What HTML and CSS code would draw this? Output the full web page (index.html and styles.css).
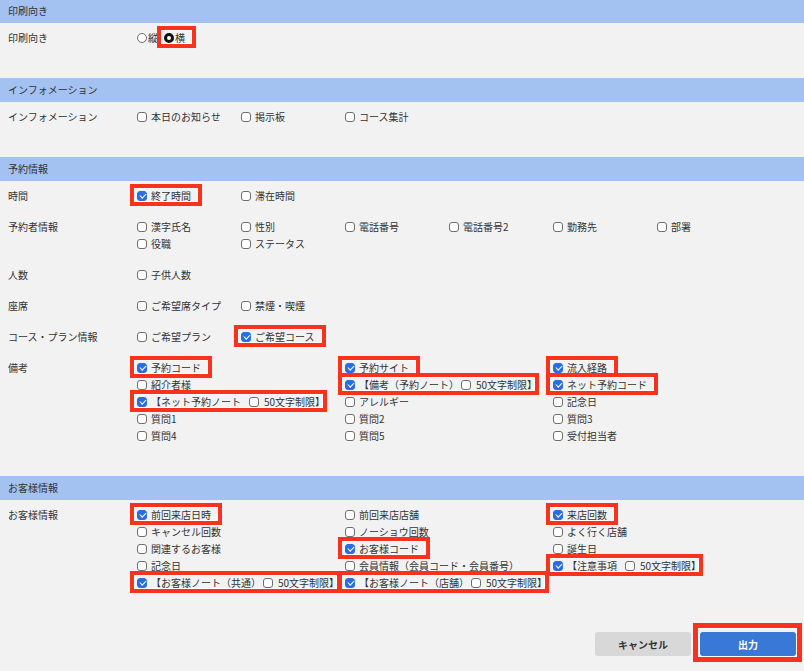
FILE: index.html
```html
<!DOCTYPE html>
<html lang="ja">
<head>
<meta charset="utf-8">
<title>印刷設定</title>
<link rel="stylesheet" href="styles.css">
</head>
<body>
<div class="page">
  <section class="sec">
    <h2 class="sec-head">印刷向き</h2>
    <div class="sec-body">
      <div class="row">
        <div class="row-label">印刷向き</div>
        <div class="opts radios">
          <label class="opt"><span class="rd"></span>縦</label>
          <label class="opt mark"><span class="rd on"></span>横</label>
        </div>
      </div>
    </div>
  </section>

  <section class="sec">
    <h2 class="sec-head">インフォメーション</h2>
    <div class="sec-body">
      <div class="row">
        <div class="row-label">インフォメーション</div>
        <div class="opts g6">
          <label class="opt"><span class="cb"></span>本日のお知らせ</label>
          <label class="opt"><span class="cb"></span>掲示板</label>
          <label class="opt"><span class="cb"></span>コース集計</label>
        </div>
      </div>
    </div>
  </section>

  <section class="sec">
    <h2 class="sec-head">予約情報</h2>
    <div class="sec-body">
      <div class="row">
        <div class="row-label">時間</div>
        <div class="opts g6">
          <label class="opt mark"><span class="cb on"></span>終了時間</label>
          <label class="opt"><span class="cb"></span>滞在時間</label>
        </div>
      </div>
      <div class="row">
        <div class="row-label">予約者情報</div>
        <div class="opts g6">
          <label class="opt"><span class="cb"></span>漢字氏名</label>
          <label class="opt"><span class="cb"></span>性別</label>
          <label class="opt"><span class="cb"></span>電話番号</label>
          <label class="opt"><span class="cb"></span>電話番号2</label>
          <label class="opt"><span class="cb"></span>勤務先</label>
          <label class="opt"><span class="cb"></span>部署</label>
          <label class="opt"><span class="cb"></span>役職</label>
          <label class="opt"><span class="cb"></span>ステータス</label>
        </div>
      </div>
      <div class="row">
        <div class="row-label">人数</div>
        <div class="opts g6">
          <label class="opt"><span class="cb"></span>子供人数</label>
        </div>
      </div>
      <div class="row">
        <div class="row-label">座席</div>
        <div class="opts g6">
          <label class="opt"><span class="cb"></span>ご希望席タイプ</label>
          <label class="opt"><span class="cb"></span>禁煙・喫煙</label>
        </div>
      </div>
      <div class="row">
        <div class="row-label">コース・プラン情報</div>
        <div class="opts g6">
          <label class="opt"><span class="cb"></span>ご希望プラン</label>
          <label class="opt mark"><span class="cb on"></span>ご希望コース</label>
        </div>
      </div>
      <div class="row">
        <div class="row-label">備考</div>
        <div class="opts g3">
          <label class="opt mark"><span class="cb on"></span>予約コード</label>
          <label class="opt mark"><span class="cb on"></span>予約サイト</label>
          <label class="opt mark"><span class="cb on"></span>流入経路</label>

          <label class="opt"><span class="cb"></span>紹介者様</label>
          <span class="opt mark tight"><span class="cb on"></span>【備考（予約ノート）<span class="cb inner"></span>50文字制限】</span>
          <label class="opt mark"><span class="cb on"></span>ネット予約コード</label>

          <span class="opt mark tight"><span class="cb on"></span>【ネット予約ノート<span class="cb inner sp"></span>50文字制限】</span>
          <label class="opt"><span class="cb"></span>アレルギー</label>
          <label class="opt"><span class="cb"></span>記念日</label>

          <label class="opt"><span class="cb"></span>質問1</label>
          <label class="opt"><span class="cb"></span>質問2</label>
          <label class="opt"><span class="cb"></span>質問3</label>

          <label class="opt"><span class="cb"></span>質問4</label>
          <label class="opt"><span class="cb"></span>質問5</label>
          <label class="opt"><span class="cb"></span>受付担当者</label>
        </div>
      </div>
    </div>
  </section>

  <section class="sec">
    <h2 class="sec-head">お客様情報</h2>
    <div class="sec-body">
      <div class="row">
        <div class="row-label">お客様情報</div>
        <div class="opts g3">
          <label class="opt mark"><span class="cb on"></span>前回来店日時</label>
          <label class="opt"><span class="cb"></span>前回来店店舗</label>
          <label class="opt mark"><span class="cb on"></span>来店回数</label>

          <label class="opt"><span class="cb"></span>キャンセル回数</label>
          <label class="opt"><span class="cb"></span>ノーショウ回数</label>
          <label class="opt"><span class="cb"></span>よく行く店舗</label>

          <label class="opt"><span class="cb"></span>関連するお客様</label>
          <label class="opt mark"><span class="cb on"></span>お客様コード</label>
          <label class="opt"><span class="cb"></span>誕生日</label>

          <label class="opt"><span class="cb"></span>記念日</label>
          <label class="opt"><span class="cb"></span>会員情報（会員コード・会員番号）</label>
          <span class="opt mark tight"><span class="cb on"></span>【注意事項<span class="cb inner sp"></span>50文字制限】</span>

          <span class="opt mark tight"><span class="cb on"></span>【お客様ノート（共通）<span class="cb inner"></span>50文字制限】</span>
          <span class="opt mark tight"><span class="cb on"></span>【お客様ノート（店舗）<span class="cb inner"></span>50文字制限】</span>
        </div>
      </div>
    </div>
  </section>

  <div class="footer">
    <button class="btn btn-cancel" type="button">キャンセル</button>
    <button class="btn btn-primary mark-btn" type="button">出力</button>
  </div>
</div>
</body>
</html>
```

FILE: styles.css
```css
* { box-sizing: border-box; }

html, body {
  margin: 0;
  padding: 0;
  background: #f2f2f2;
}

body {
  font-family: "Noto Sans CJK JP", "Noto Sans", sans-serif;
  font-size: 10px;
  color: #333;
  overflow: hidden;
}

.page {
  width: 804px;
  height: 672px;
  margin-top: -1px;
  display: flex;
  flex-direction: column;
}

.sec-head {
  margin: 0;
  height: 24px;
  line-height: 24px;
  padding-left: 8px;
  font-size: 10px;
  font-weight: normal;
  color: #333;
  background: #a3c1f1;
}

.sec-body {
  padding-bottom: 24px;
}

.row {
  display: flex;
  padding: 6px 0 8px;
}

.row-label {
  width: 137px;
  flex: none;
  padding-left: 8px;
  line-height: 17px;
}

.opts {
  flex: 1;
}

.opts.g6 {
  display: grid;
  grid-template-columns: repeat(6, 104px);
  grid-auto-rows: 17px;
}

.opts.g3 {
  display: grid;
  grid-template-columns: repeat(3, 208px);
  grid-auto-rows: 17px;
}

.opts.radios {
  display: flex;
  gap: 6px;
}

.opt {
  position: relative;
  display: inline-flex;
  align-items: center;
  height: 17px;
  line-height: 17px;
  justify-self: start;
  white-space: nowrap;
}

.cb {
  display: inline-block;
  flex: none;
  width: 10px;
  height: 10px;
  margin-right: 4px;
  border: 1px solid #6e6e6e;
  border-radius: 3px;
  background: #fff;
  position: relative;
}

.cb.on {
  border-color: #2a6ce2;
  background: #2a6ce2;
}

.cb.on::after {
  content: "";
  position: absolute;
  left: 2.6px;
  top: 0.6px;
  width: 2.6px;
  height: 5px;
  border-right: 1.5px solid #fff;
  border-bottom: 1.5px solid #fff;
  transform: rotate(45deg);
}

.cb.inner {
  margin-left: 2px;
  margin-right: 5px;
}

.cb.inner.sp {
  margin-left: 8px;
}

.rd {
  display: inline-block;
  flex: none;
  width: 10px;
  height: 10px;
  margin-right: 1px;
  border: 1px solid #6e6e6e;
  border-radius: 50%;
  background: #fff;
}

.rd.on {
  border: 3px solid #111;
}

/* red annotation frames lying over the form */
.mark::after {
  content: "";
  position: absolute;
  top: -3px;
  bottom: -2px;
  left: -7px;
  right: -11px;
  border: 4px solid #f8321c;
  box-shadow: inset 0 0 0 1px #fff;
  pointer-events: none;
  z-index: 2;
}

.mark.tight::after {
  right: -2px;
}

.footer {
  display: flex;
  justify-content: flex-end;
  gap: 9px;
  padding: 9px 8px 15px;
}

.btn {
  width: 96px;
  height: 24px;
  border: none;
  border-radius: 3px;
  font-family: "Noto Sans CJK JP", "Noto Sans", sans-serif;
  font-size: 10px;
  font-weight: bold;
  cursor: pointer;
}

.btn-cancel {
  background: #d8d8d8;
  color: #333;
}

.btn-primary {
  background: #3a78d8;
  color: #fff;
}

.mark-btn {
  position: relative;
}

.mark-btn::after {
  content: "";
  position: absolute;
  top: -9px;
  bottom: -6px;
  left: -7px;
  right: -6px;
  border: 5px solid #f8321c;
  box-shadow: inset 0 0 0 1px #fff;
  pointer-events: none;
}
```
